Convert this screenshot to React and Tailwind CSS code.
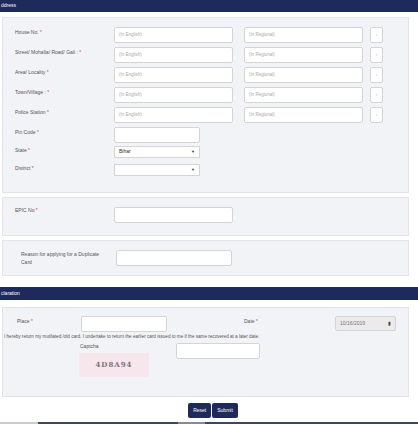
import React from "react";

const navy = "bg-[#1f2a5c]";

function Star() {
  return <span className="text-[#e33]"> *</span>;
}

function Input({ w = "w-[119px]", ph, className = "" }) {
  return (
    <div className={`${w} h-[16px] bg-white border border-[#d4d4d4] rounded-[2px] flex items-center px-[4px] text-[4.5px] text-[#aaa] ${className}`}>
      {ph}
    </div>
  );
}

const rows = ["House No.", "Street/ Mohalla/ Road/ Gali :", "Area/ Locality", "Town/Village :", "Police Station"];

export default function App() {
  return (
    <div className="w-[418px] h-[426px] bg-white text-[#555] overflow-hidden" style={{ fontFamily: "'Liberation Sans', Arial, sans-serif" }}>
      <div className={`${navy} h-[12px] text-white text-[5px] flex items-center pl-[1px]`}>ddress</div>
      <div className="mx-[2px] mt-[5px] w-[407px] bg-[#f2f3f6] border border-[#e4e4e8] pt-[9px] pb-[14px] text-[5px]">
        {rows.map((r) => (
          <div key={r} className="flex items-start h-[20px]">
            <div className="w-[111px] pl-[12px] pt-[2px]">{r}<Star /></div>
            <Input ph="(In English)" />
            <Input ph="(In Regional)" className="ml-[11px]" />
            <Input w="w-[13px]" ph="▫" className="ml-[7px] justify-center px-0 text-[#666]" />
          </div>
        ))}
        <div className="flex items-start h-[20px]">
          <div className="w-[111px] pl-[12px] pt-[2px]">Pin Code<Star /></div>
          <Input w="w-[86px]" />
        </div>
        <div className="flex items-start h-[18px] -mt-[1px]">
          <div className="w-[111px] pl-[12px] pt-[1px]">State<Star /></div>
          <div className="w-[86px] h-[12px] bg-white border border-[#d4d4d4] flex items-center justify-between px-[4px] text-[#333]">Bihar<span className="text-[4px]">▼</span></div>
        </div>
        <div className="flex items-start h-[14px]">
          <div className="w-[111px] pl-[12px] pt-[1px]">District<Star /></div>
          <div className="w-[86px] h-[12px] bg-white border border-[#d4d4d4] flex items-center justify-end px-[4px] text-[#333]"><span className="text-[4px]">▼</span></div>
        </div>
      </div>
      <div className="mx-[2px] mt-[4px] w-[407px] h-[39px] bg-[#f2f3f6] border border-[#e4e4e8] flex items-start pt-[9px] text-[5px]">
        <div className="w-[111px] pl-[12px]">EPIC No<Star /></div>
        <Input w="w-[119px]" />
      </div>
      <div className="mx-[2px] mt-[4px] w-[407px] h-[36px] bg-[#f2f3f6] border border-[#e4e4e8] flex items-center text-[5px]">
        <div className="w-[113px] pl-[18px] leading-[8px]">Reason for applying for a Duplicate<br />Card</div>
        <Input w="w-[116px]" />
      </div>
      <div className={`${navy} h-[13px] mt-[11px] text-white text-[5px] flex items-center pl-[1px]`}>claration</div>
      <div className="mx-[2px] mt-[7px] w-[407px] h-[90px] bg-[#f2f3f6] border border-[#e4e4e8] text-[5px] pt-[8px]">
        <div className="flex items-start">
          <div className="w-[78px] pl-[14px] pt-[2px]">Place<Star /></div>
          <Input w="w-[86px]" />
          <div className="ml-[77px] pt-[2px] w-[91px]">Date<Star /></div>
          <div className="w-[61px] h-[15px] bg-[#ebebeb] border border-[#d4d4d4] rounded-[2px] flex items-center justify-between px-[4px] text-[#777]">10/16/2019<span className="text-[5px] text-[#444]">▮</span></div>
        </div>
        <div className="pl-[1px] mt-[2px] text-[4.6px] whitespace-nowrap">I hereby return my mutilated /old card. I undertake to return the earlier card issued to me if the same recovered at a later date.</div>
        <div className="flex items-start mt-[2px]">
          <div className="w-[96px] pl-[76px]">
            <div className="pl-[1px]">Captcha</div>
            <div className="mt-[3px] w-[70px] h-[24px] flex items-center justify-center text-[7px] font-bold tracking-[1px] text-[#777] bg-[#f7e6ec]" style={{ fontFamily: "'DejaVu Serif', serif" }}>4D8A94</div>
          </div>
          <div className="ml-[77px]"><Input w="w-[84px]" className="h-[15px]" /></div>
        </div>
      </div>
      <div className="flex justify-center gap-[1px] mt-[6px] pl-[8px]">
        <div className={`${navy} text-white text-[5px] h-[15px] px-[5px] flex items-center rounded-[2px]`}>Reset</div>
        <div className={`${navy} text-white text-[5px] h-[15px] px-[5px] flex items-center rounded-[2px]`}>Submit</div>
      </div>
      <div className="mt-[4px] h-[2px] bg-[#ccc] flex">
        <div className="ml-[38px] w-[140px] bg-[#3a4a5a]" />
        <div className="w-[27px] bg-[#889]" />
        <div className="w-[213px] bg-[#3a4a5a]" />
      </div>
    </div>
  );
}
